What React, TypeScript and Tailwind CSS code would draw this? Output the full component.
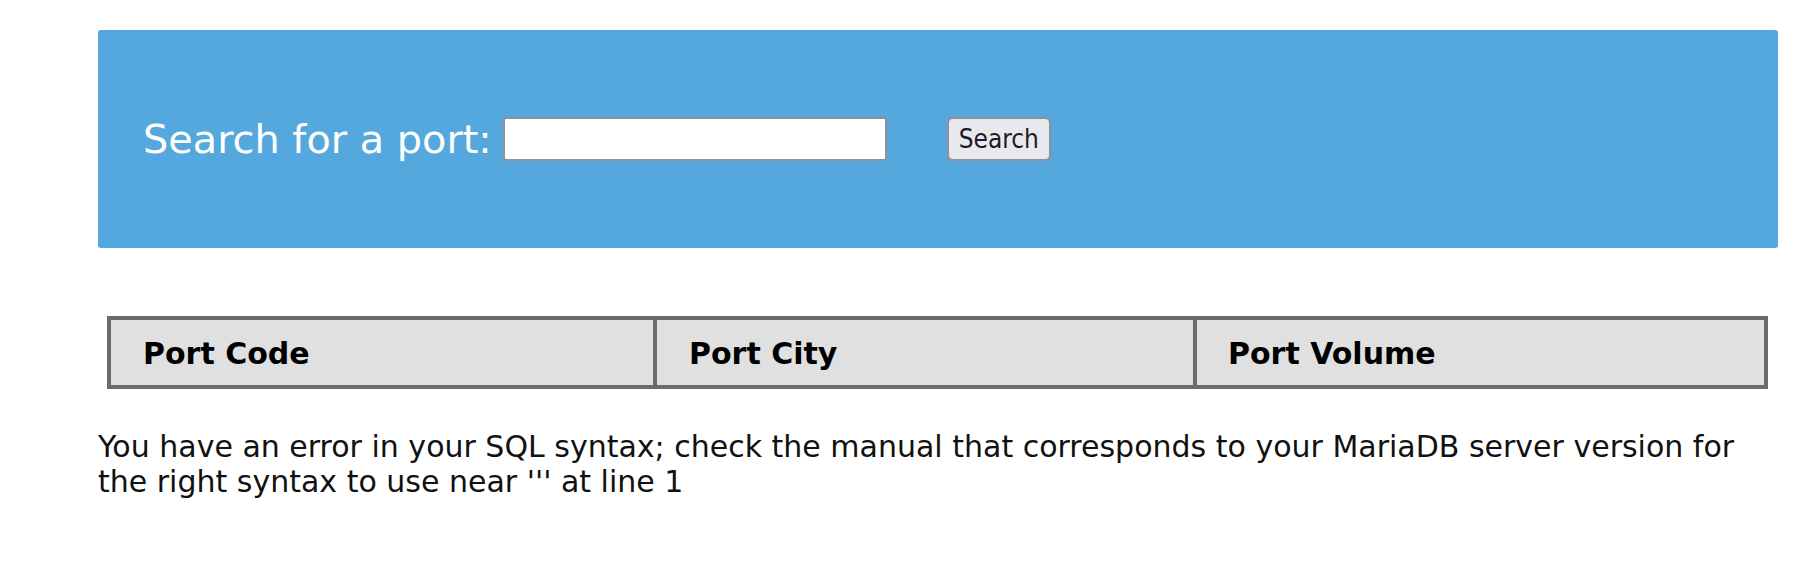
import React from "react";

export default function App() {
  return (
    <div className="w-[1816px] h-[586px] bg-white overflow-hidden" style={{ fontFamily: '"DejaVu Sans", sans-serif' }}>
      <div className="pt-[30px] pl-[98px]">
        <div className="w-[1680px] h-[218px] bg-[#55a8dd] rounded-[3px] flex items-center pl-[45px]">
          <span className="text-[39.8px] leading-[46px] text-white">Search for a port:</span>
          <input
            type="text"
            className="ml-[11px] w-[384px] h-[44px] bg-white border-2 border-[#8f8f9d] rounded-[3px] outline-none"
          />
          <button
            className="ml-[60px] w-[104px] h-[44px] bg-[#e9e9ed] border-2 border-[#8f8f9d] rounded-[6px] text-[26px] leading-none text-[#1b1b2a] flex items-center justify-center"
            style={{ fontFamily: '"DejaVu Sans Condensed", "DejaVu Sans", sans-serif' }}
          >
            Search
          </button>
        </div>
        <div className="mt-[68px] ml-[9px] w-[1661px] border-4 border-[#6b6b6b] bg-[#e0e0e0] flex text-[30px] leading-[35px] font-bold text-black">
          <div className="w-[542px] pl-[32px] pt-[16px] pb-[14px]">Port Code</div>
          <div className="w-[540px] border-l-4 border-[#6b6b6b] pl-[32px] pt-[16px] pb-[14px]">Port City</div>
          <div className="flex-1 border-l-4 border-[#6b6b6b] pl-[31px] pt-[16px] pb-[14px]">Port Volume</div>
        </div>
        <p className="mt-[40px] w-[1680px] text-[30px] leading-[35px] text-[#111]">
          You have an error in your SQL syntax; check the manual that corresponds to your MariaDB server version for the right syntax to use near &#39;&#39;&#39; at line 1
        </p>
      </div>
    </div>
  );
}
